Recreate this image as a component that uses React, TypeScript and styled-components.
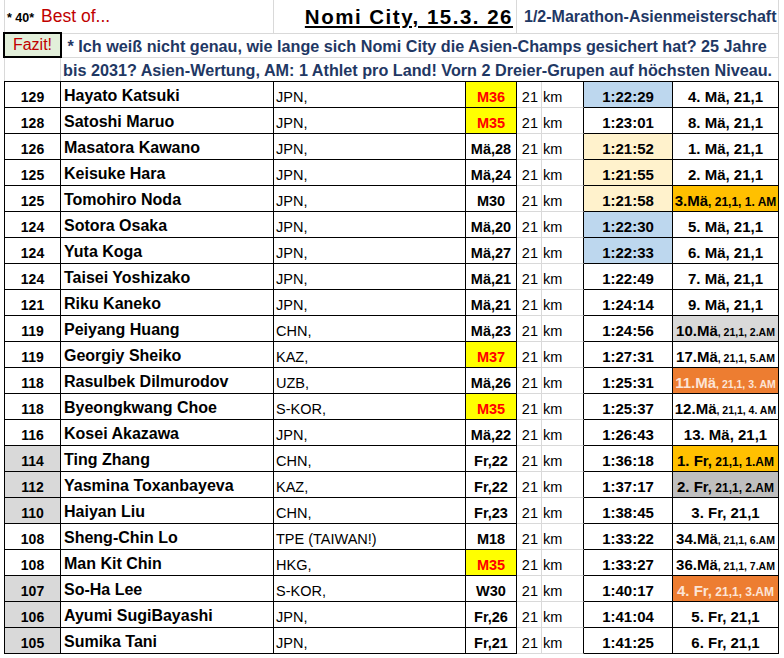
import styled, { createGlobalStyle } from "styled-components";
import { Fragment } from "react";

const GRID = '#d9d9d9'
const NAVY = '#1f3864'
const DARK_RED = '#c00000'

const GlobalStyle = createGlobalStyle`
    body {
        margin: 0;
        background: #fff;
        font-family: "Liberation Sans", Arial, sans-serif;
        color: #000;
    }
`

const Sheet = styled.div`
    width: 784px;
    padding-left: 4px;
    box-sizing: border-box;
`

const TopRow = styled.div`
    display: grid;
    grid-template-columns: 269px 243px 262px;

    width: 775px;
    height: 34px;
    box-sizing: border-box;

    border-left: 1px solid ${GRID};
    border-bottom: 1px solid ${GRID};
`

const TopCell = styled.div<{ $justify?: string, $pad?: string }>`
    display: flex;
    align-items: center;
    justify-content: ${p => p.$justify || 'flex-start'};
    gap: 7px;

    padding: ${p => p.$pad || '0'};
    border-right: 1px solid ${GRID};
    white-space: nowrap;
`

const Tag = styled.span`
    font-size: 12.5px;
    font-weight: bold;
    padding-top: 3px;
`

const BestOf = styled.span`
    font-size: 17.5px;
    color: ${DARK_RED};
`

const Title = styled.span`
    font-size: 20.5px;
    font-weight: bold;
    letter-spacing: 1.5px;
    text-decoration: underline;
    text-decoration-thickness: 2px;
    text-underline-offset: 2px;
`

const Subtitle = styled.span`
    font-size: 16px;
    font-weight: bold;
    color: ${NAVY};
`

const NoteArea = styled.div`
    display: grid;
    grid-template-columns: 57px 1fr;
    grid-template-rows: 24px 23px;

    width: 775px;
`

const FazitBox = styled.div`
    grid-row: 1;
    grid-column: 1;

    display: flex;
    justify-content: center;
    align-items: center;

    width: 59px;
    height: 26px;
    margin: -2px 0 0 -1px;
    box-sizing: border-box;

    background: #e2efda;
    border: 2px solid #000;

    font-size: 16px;
    color: ${DARK_RED};
    position: relative;
`

const EmptyCell = styled.div`
    grid-row: 2;
    grid-column: 1;

    border-left: 1px solid ${GRID};
    border-right: 1px solid ${GRID};
`

const NoteText = styled.div`
    grid-row: 1 / span 2;
    grid-column: 2;

    padding-left: 2px;
    border-right: 1px solid ${GRID};
    background: linear-gradient(to bottom, transparent 23px, ${GRID} 23px, ${GRID} 24px, transparent 24px);

    font-size: 16.2px;
    font-weight: bold;
    line-height: 24px;
    color: ${NAVY};
`

const NoteLine = styled.div`
    white-space: nowrap;
`

const Table = styled.div`
    display: grid;
    grid-template-columns: 56px 213px 192px 51px 25px 42px 89px 106px;
    grid-auto-rows: 26px;

    width: 775px;
    box-sizing: border-box;

    border-top: 1px solid #000;
    border-left: 1px solid #000;
`

const Cell = styled.div<{ $bg?: string }>`
    display: flex;
    align-items: flex-end;

    padding-bottom: 3px;
    box-sizing: border-box;

    background: ${p => p.$bg || 'transparent'};
    border-right: 1px solid #000;
    border-bottom: 1px solid #000;

    line-height: 1;
    white-space: pre;
`

const RankCell = styled(Cell)`
    justify-content: center;
    font-size: 14px;
    font-weight: bold;
`

const NameCell = styled(Cell)`
    padding-left: 3px;
    font-size: 16px;
    font-weight: bold;
`

const CountryCell = styled(Cell)`
    padding-left: 2px;
    font-size: 14.5px;
`

const AgeCell = styled(Cell)<{ $marked?: boolean }>`
    justify-content: center;
    font-size: 14.5px;
    font-weight: bold;
    color: ${p => p.$marked ? '#ff0000' : '#000'};
`

const DistNum = styled(Cell)`
    justify-content: flex-end;
    padding-right: 3px;
    border-right-color: ${GRID};
    border-bottom-color: ${GRID};
    font-size: 14.5px;
`

const DistUnit = styled(Cell)`
    padding-left: 1px;
    border-bottom-color: ${GRID};
    font-size: 14.5px;
`

const TimeCell = styled(Cell)`
    justify-content: center;
    font-size: 15px;
    font-weight: bold;
`

const ResultCell = styled(Cell)<{ $light?: boolean }>`
    justify-content: center;
    font-size: 15px;
    font-weight: bold;
    color: ${p => p.$light ? '#fce4d6' : '#000'};
`

const Small = styled.span<{ $size: number }>`
    font-size: ${p => p.$size}px;
`

const BLUE = '#bdd7ee'
const CREAM = '#fff2cc'
const GOLD = '#ffc000'
const ORANGE = '#ed7d31'
const GREY = '#d9d9d9'
const GREY_DARK = '#bfbfbf'

type Athlete = {
    no: number
    name: string
    country: string
    age: string
    marked?: boolean
    woman?: boolean
    time: string
    timeBg?: string
    result: string
    rest?: string
    restSize?: number
    resultBg?: string
    light?: boolean
}

const athletes: Athlete[] = [
    { no: 129, name: 'Hayato Katsuki', country: 'JPN,', age: 'M36', marked: true, time: '1:22:29', timeBg: BLUE, result: '4. Mä, 21,1' },
    { no: 128, name: 'Satoshi Maruo', country: 'JPN,', age: 'M35', marked: true, time: '1:23:01', result: '8. Mä, 21,1' },
    { no: 126, name: 'Masatora Kawano', country: 'JPN,', age: 'Mä,28', time: '1:21:52', timeBg: CREAM, result: '1. Mä, 21,1' },
    { no: 125, name: 'Keisuke Hara', country: 'JPN,', age: 'Mä,24', time: '1:21:55', timeBg: CREAM, result: '2. Mä, 21,1' },
    { no: 125, name: 'Tomohiro Noda', country: 'JPN,', age: 'M30', time: '1:21:58', timeBg: CREAM, result: '3.Mä', rest: ', 21,1, 1. AM', restSize: 12, resultBg: GOLD },
    { no: 124, name: 'Sotora Osaka', country: 'JPN,', age: 'Mä,20', time: '1:22:30', timeBg: BLUE, result: '5. Mä, 21,1' },
    { no: 124, name: 'Yuta Koga', country: 'JPN,', age: 'Mä,27', time: '1:22:33', timeBg: BLUE, result: '6. Mä, 21,1' },
    { no: 124, name: 'Taisei Yoshizako', country: 'JPN,', age: 'Mä,21', time: '1:22:49', result: '7. Mä, 21,1' },
    { no: 121, name: 'Riku Kaneko', country: 'JPN,', age: 'Mä,21', time: '1:24:14', result: '9. Mä, 21,1' },
    { no: 119, name: 'Peiyang Huang', country: 'CHN,', age: 'Mä,23', time: '1:24:56', result: '10.Mä', rest: ', 21,1, 2.AM', restSize: 10.5, resultBg: GREY },
    { no: 119, name: 'Georgiy Sheiko', country: 'KAZ,', age: 'M37', marked: true, time: '1:27:31', result: '17.Mä', rest: ', 21,1, 5.AM', restSize: 10.5 },
    { no: 118, name: 'Rasulbek Dilmurodov', country: 'UZB,', age: 'Mä,26', time: '1:25:31', result: '11.Mä', rest: ', 21,1, 3. AM', restSize: 10.5, resultBg: ORANGE, light: true },
    { no: 118, name: 'Byeongkwang Choe', country: 'S-KOR,', age: 'M35', marked: true, time: '1:25:37', result: '12.Mä', rest: ', 21,1, 4. AM', restSize: 10.5 },
    { no: 116, name: 'Kosei Akazawa', country: 'JPN,', age: 'Mä,22', time: '1:26:43', result: '13. Mä, 21,1' },
    { no: 114, name: 'Ting Zhang', country: 'CHN,', age: 'Fr,22', woman: true, time: '1:36:18', result: '1. Fr,', rest: ' 21,1, 1.AM', restSize: 12, resultBg: GOLD },
    { no: 112, name: 'Yasmina Toxanbayeva', country: 'KAZ,', age: 'Fr,22', woman: true, time: '1:37:17', result: '2. Fr,', rest: ' 21,1, 2.AM', restSize: 12, resultBg: GREY_DARK },
    { no: 110, name: 'Haiyan Liu', country: 'CHN,', age: 'Fr,23', woman: true, time: '1:38:45', result: '3. Fr, 21,1' },
    { no: 108, name: 'Sheng-Chin Lo', country: 'TPE (TAIWAN!)', age: 'M18', time: '1:33:22', result: '34.Mä', rest: ', 21,1, 6.AM', restSize: 10.5 },
    { no: 108, name: 'Man Kit Chin', country: 'HKG,', age: 'M35', marked: true, time: '1:33:27', result: '36.Mä', rest: ', 21,1, 7.AM', restSize: 10.5 },
    { no: 107, name: 'So-Ha Lee', country: 'S-KOR,', age: 'W30', woman: true, time: '1:40:17', result: '4. Fr,', rest: ' 21,1, 3.AM', restSize: 12, resultBg: ORANGE, light: true },
    { no: 106, name: 'Ayumi SugiBayashi', country: 'JPN,', age: 'Fr,26', woman: true, time: '1:41:04', result: '5. Fr, 21,1' },
    { no: 105, name: 'Sumika Tani', country: 'JPN,', age: 'Fr,21', woman: true, time: '1:41:25', result: '6. Fr, 21,1' },
]

export default function App() {
    return (
        <Sheet>
            <GlobalStyle />

            <TopRow>
                <TopCell $pad="0 0 0 2px">
                    <Tag>* 40*</Tag>
                    <BestOf>Best of...</BestOf>
                </TopCell>
                <TopCell $justify="flex-end" $pad="0 3px 0 0">
                    <Title>Nomi City, 15.3. 26</Title>
                </TopCell>
                <TopCell $pad="0 0 0 7px">
                    <Subtitle>1/2-Marathon-Asienmeisterschaft</Subtitle>
                </TopCell>
            </TopRow>

            <NoteArea>
                <FazitBox>Fazit!</FazitBox>
                <EmptyCell />
                <NoteText>
                    <NoteLine>&nbsp;* Ich weiß nicht genau, wie lange sich Nomi City die Asien-Champs gesichert hat? 25 Jahre</NoteLine>
                    <NoteLine>bis 2031? Asien-Wertung, AM: 1 Athlet pro Land! Vorn 2 Dreier-Grupen auf höchsten Niveau.</NoteLine>
                </NoteText>
            </NoteArea>

            <Table>
                {
                    athletes.map((a, index) =>
                        <Fragment key={ index }>
                            <RankCell $bg={ a.woman ? GREY : undefined }>{ a.no }</RankCell>
                            <NameCell>{ a.name }</NameCell>
                            <CountryCell>{ a.country }</CountryCell>
                            <AgeCell $marked={ a.marked } $bg={ a.marked ? '#ffff00' : undefined }>{ a.age }</AgeCell>
                            <DistNum>21</DistNum>
                            <DistUnit>km</DistUnit>
                            <TimeCell $bg={ a.timeBg }>{ a.time }</TimeCell>
                            <ResultCell $bg={ a.resultBg } $light={ a.light }>
                                <span>
                                    { a.result }
                                    { a.rest && <Small $size={ a.restSize || 11 }>{ a.rest }</Small> }
                                </span>
                            </ResultCell>
                        </Fragment>
                    )
                }
            </Table>
        </Sheet>
    )
}
